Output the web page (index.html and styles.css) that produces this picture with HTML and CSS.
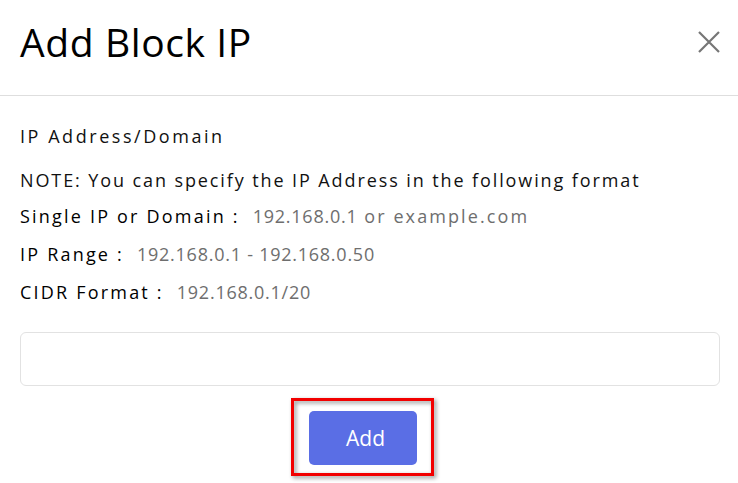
FILE: index.html
```html
<!DOCTYPE html>
<html lang="en">
<head>
<meta charset="utf-8">
<title>Add Block IP</title>
<link rel="stylesheet" href="styles.css">
</head>
<body>
<div class="modal">
  <div class="modal-header">
    <h1 class="modal-title">Add Block IP</h1>
    <button class="close-btn" aria-label="Close">
      <svg width="22" height="22" viewBox="0 0 22 22"><path d="M1 1L21 21M21 1L1 21" stroke="#767676" stroke-width="2.2" fill="none"/></svg>
    </button>
  </div>
  <div class="modal-body">
    <div class="field-label">IP Address/Domain</div>
    <div class="note">NOTE: You can specify the IP Address in the following format</div>
    <div class="fmt-row fmt-first"><span class="fmt-label">Single IP or Domain :</span><span class="fmt-value">192.168.0.1<span class="fmt-words"> or example.com</span></span></div>
    <div class="fmt-row"><span class="fmt-label">IP Range :</span><span class="fmt-value">192.168.0.1 - 192.168.0.50</span></div>
    <div class="fmt-row"><span class="fmt-label">CIDR Format :</span><span class="fmt-value">192.168.0.1/20</span></div>
    <input class="ip-input" type="text">
    <div class="actions">
      <div class="btn-wrap">
        <button class="add-btn">Add</button>
        <div class="highlight"></div>
      </div>
    </div>
  </div>
</div>
</body>
</html>
```
FILE: styles.css
```css
* { box-sizing: border-box; }
html, body { margin: 0; padding: 0; background: #fff; }
body {
  font-family: "Open Sans", "Liberation Sans", sans-serif;
  color: #111;
  width: 738px;
  height: 483px;
  overflow: hidden;
}
.modal-header {
  height: 96px;
  border-bottom: 1px solid #dedede;
  display: flex;
  align-items: flex-start;
  justify-content: space-between;
  padding: 18px 18px 0 20px;
}
.modal-title {
  margin: 0;
  font-size: 39px;
  font-weight: 400;
  color: #000;
  line-height: 48px;
  letter-spacing: 0.6px;
}
.close-btn {
  border: 0;
  background: none;
  padding: 0;
  width: 22px;
  height: 22px;
  display: flex;
  margin-top: 13px;
}
.modal-body {
  padding: 28px 19px 0 20px;
}
.field-label, .note, .fmt-row {
  font-size: 18px;
  line-height: 24px;
  color: #111;
}
.field-label { letter-spacing: 2.55px; }
.note { margin-top: 20px; letter-spacing: 1.9px; }
.fmt-row { margin-top: 14px; display: flex; }
.fmt-first { margin-top: 12px; }
.fmt-label {
  font-weight: 500;
  color: #000;
  letter-spacing: 2.2px;
  margin-right: 13px;
}
.fmt-value { color: #6e6e6e; letter-spacing: 0.75px; }
.fmt-words { letter-spacing: 2.1px; }
.ip-input {
  display: block;
  margin-top: 28px;
  width: 700px;
  height: 54px;
  border: 1px solid #e2e2e2;
  border-radius: 6px;
  outline: none;
}
.actions {
  display: flex;
  padding-left: 289px;
  margin-top: 25px;
}
.btn-wrap { position: relative; }
.add-btn {
  width: 108px;
  height: 54px;
  border: 0;
  border-radius: 5px;
  background: #5a6ee5;
  color: #fff;
  font-family: inherit;
  font-size: 21px;
  padding: 0 0 0 5px;
}
.highlight {
  position: absolute;
  left: -18px;
  top: -13px;
  right: -17px;
  bottom: -11px;
  border: 3px solid #f20000;
  filter: drop-shadow(2px 2px 2px rgba(0,0,0,0.45));
  pointer-events: none;
}
```
